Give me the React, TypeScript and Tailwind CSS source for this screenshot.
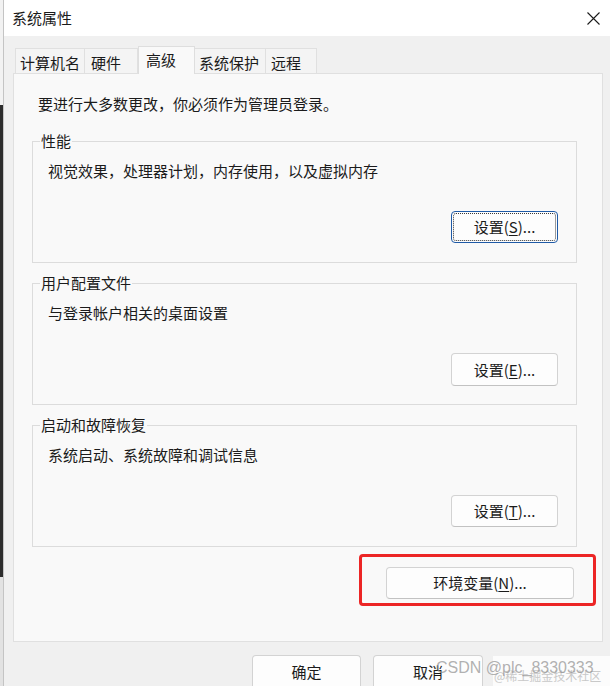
import type { ReactNode } from 'react'

const tabs = [
  { label: '计算机名', w: 'w-[70px]', pl: 'pl-[4px]', first: true },
  { label: '硬件', w: 'w-[53px]', pl: 'pl-[6px]' },
  { label: '高级', w: 'w-[57px]', pl: 'pl-[7px]', active: true },
  { label: '系统保护', w: 'w-[71px]', pl: 'pl-[4px]' },
  { label: '远程', w: 'w-[51px]', pl: 'pl-[5px]' },
]

function Key({ k }: { k: string }) {
  return <span className="underline underline-offset-2 decoration-1">{k}</span>
}

function DlgButton({
  children,
  className = '',
  focused = false,
}: {
  children: ReactNode
  className?: string
  focused?: boolean
}) {
  return (
    <button
      className={`relative flex items-center justify-center rounded-[4px] bg-[#fdfdfd] text-[15px] leading-[20px] text-[#1b1b1b] border ${
        focused ? 'border-[#1f5aa6]' : 'border-[#d3d3d3] border-b-[#c2c2c2]'
      } ${className}`}
    >
      {focused && (
        <span className="absolute inset-[1px] rounded-[3px] border border-dotted border-[#3a3a3a]" />
      )}
      <span className="relative">{children}</span>
    </button>
  )
}

function GroupBox({
  title,
  text,
  button,
  className = '',
}: {
  title: string
  text: string
  button: ReactNode
  className?: string
}) {
  return (
    <div
      className={`relative shrink-0 ml-[18px] w-[545px] h-[122px] border border-[#dcdcdc] flex flex-col ${className}`}
    >
      <span className="absolute -top-[11px] left-[7px] px-[1px] bg-[#f9f9f9] leading-[20px]">
        {title}
      </span>
      <p className="pt-[19px] pl-[15px] leading-[20px]">{text}</p>
      <div className="mt-[30px] self-end mr-[18px]">{button}</div>
    </div>
  )
}

export default function App() {
  return (
    <div className="relative w-[610px] h-[686px] flex overflow-hidden text-[15px] text-[#1b1b1b] font-['Noto_Sans_CJK_SC','Liberation_Sans',sans-serif]">
      {/* background behind the dialog */}
      <div className="w-[3px] shrink-0 flex flex-col">
        <div className="h-[105px] shrink-0 bg-[#f2f2f2]" />
        <div className="h-[472px] shrink-0 bg-[#2c2c2c]" />
        <div className="flex-1 bg-[#e2e2e2]" />
      </div>

      <div className="flex-1 flex flex-col border-l border-[#c4c4c4]">
        {/* title bar */}
        <div className="h-[36px] shrink-0 bg-white flex items-center justify-between pl-[8px] pr-[10px]">
          <span className="leading-[20px]">系统属性</span>
          <svg width="13" height="13" viewBox="0 0 13 13" className="text-[#1b1b1b]">
            <path d="M0.5 0.5L12.5 12.5M12.5 0.5L0.5 12.5" stroke="currentColor" strokeWidth="1.1" />
          </svg>
        </div>

        <div className="flex-1 flex flex-col bg-[#f0f0f0] pl-[9px] pr-[7px]">
          {/* tabs */}
          <div className="h-[37px] shrink-0 flex items-end pl-[2px]">
            {tabs.map((t) =>
              t.active ? (
                <div
                  key={t.label}
                  className={`relative z-10 -mb-px h-[28px] ${t.w} ${t.pl} pt-[3px] bg-[#f9f9f9] border-t border-x border-[#dedede] leading-[20px]`}
                >
                  {t.label}
                </div>
              ) : (
                <div
                  key={t.label}
                  className={`h-[25px] ${t.w} ${t.pl} pt-[4px] bg-[#f4f4f4] border-t border-r border-[#e0e0e0] ${
                    t.first ? 'border-l' : ''
                  } leading-[20px]`}
                >
                  {t.label}
                </div>
              )
            )}
          </div>

          {/* tab panel */}
          <div className="h-[569px] shrink-0 border border-[#e0e0e0] bg-[#f9f9f9] flex flex-col">
            <p className="pt-[20px] pl-[24px] leading-[20px]">
              要进行大多数更改，你必须作为管理员登录。
            </p>

            <GroupBox
              className="mt-[27px]"
              title="性能"
              text="视觉效果，处理器计划，内存使用，以及虚拟内存"
              button={
                <DlgButton focused className="w-[107px] h-[32px]">
                  设置(<Key k="S" />)...
                </DlgButton>
              }
            />
            <GroupBox
              className="mt-[20px]"
              title="用户配置文件"
              text="与登录帐户相关的桌面设置"
              button={
                <DlgButton className="w-[107px] h-[33px]">
                  设置(<Key k="E" />)...
                </DlgButton>
              }
            />
            <GroupBox
              className="mt-[20px]"
              title="启动和故障恢复"
              text="系统启动、系统故障和调试信息"
              button={
                <DlgButton className="w-[107px] h-[32px]">
                  设置(<Key k="T" />)...
                </DlgButton>
              }
            />

            <div className="relative mt-[20px] self-end mr-[28px]">
              <DlgButton className="w-[188px] h-[32px]">
                环境变量(<Key k="N" />)...
              </DlgButton>
              <div className="absolute -top-[13px] -bottom-[7px] -left-[27px] -right-[22px] border-[3px] border-[#ec2525] rounded-[4px] pointer-events-none" />
            </div>
          </div>

          {/* dialog buttons */}
          <div className="flex shrink-0 gap-[12px] pt-[13px] pl-[239px]">
            <DlgButton className="w-[109px] h-[34px]">确定</DlgButton>
            <DlgButton className="w-[110px] h-[34px]">取消</DlgButton>
          </div>
        </div>
      </div>

      {/* watermark */}
      <div className="absolute left-[493px] top-[656px] w-[117px] h-[30px] bg-white/80" />
      <span className="absolute left-[494px] top-[668px] text-[12px] leading-[16px] text-[#c9c9c9]">
        @稀土掘金技术社区
      </span>
      <span className="absolute left-[436px] top-[657px] text-[16px] leading-[22px] text-[#8f8f8f]/70 font-['Liberation_Sans',sans-serif]">
        CSDN @plc_8330333
      </span>
    </div>
  )
}
